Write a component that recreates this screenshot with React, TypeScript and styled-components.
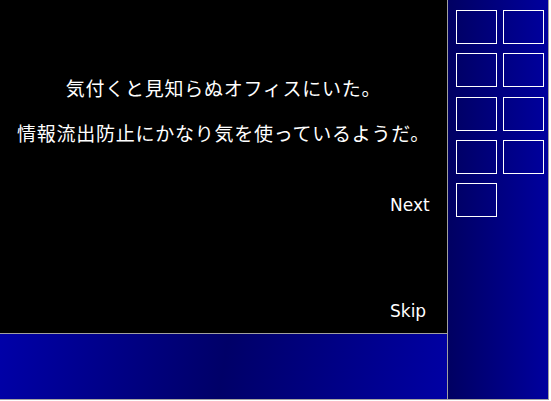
import React from "react";
import styled, { createGlobalStyle } from "styled-components";

const GlobalStyle = createGlobalStyle`
  html, body {
    margin: 0;
    padding: 0;
    background: #ffffff;
  }
`;

const lines = [
  "気付くと見知らぬオフィスにいた。",
  "情報流出防止にかなり気を使っているようだ。",
];

const slots = Array.from({ length: 9 }, (_, i) => i);

export default function App() {
  return (
    <>
      <GlobalStyle />
      <Frame>
        <MainColumn>
          <Stage>
            <Message>
              {lines.map((line) => (
                <Line key={line}>{line}</Line>
              ))}
            </Message>
            <Controls>
              <ControlButton>Next</ControlButton>
              <ControlButton>Skip</ControlButton>
            </Controls>
          </Stage>
          <Band />
        </MainColumn>
        <Sidebar>
          <SlotGrid>
            {slots.map((i) => (
              <Slot key={i} />
            ))}
          </SlotGrid>
        </Sidebar>
      </Frame>
    </>
  );
}

const Frame = styled.div`
  display: flex;
  width: 549px;
  height: 400px;
  box-sizing: border-box;
  border-right: 1px solid #a0a0a0;
  border-bottom: 1px solid #a0a0a0;
`;

const MainColumn = styled.div`
  display: flex;
  flex-direction: column;
  width: 448px;
  box-sizing: border-box;
  border-right: 1px solid #a0a0a0;
`;

const Stage = styled.div`
  display: flex;
  flex-direction: column;
  height: 334px;
  box-sizing: border-box;
  border-bottom: 1px solid #a0a0a0;
  background: #000000;
  padding-top: 76px;
`;

const Message = styled.div`
  display: flex;
  flex-direction: column;
  gap: 21px;
  align-items: center;
`;

const Line = styled.div`
  color: #ffffff;
  font-family: "Noto Sans CJK JP", sans-serif;
  font-size: 19px;
  line-height: 24px;
  letter-spacing: 0.75px;
  white-space: nowrap;
`;

const Controls = styled.div`
  display: flex;
  flex-direction: column;
  align-items: flex-start;
  gap: 86px;
  margin-top: 50px;
  padding-left: 390px;
`;

const ControlButton = styled.button`
  background: none;
  border: none;
  padding: 0;
  color: #ffffff;
  font-family: "DejaVu Sans", sans-serif;
  font-size: 17px;
  line-height: 20px;
  cursor: pointer;
`;

const Band = styled.div`
  flex: 1;
  background: linear-gradient(100deg, #0000a8 0%, #000068 50%, #0000a4 100%);
`;

const Sidebar = styled.div`
  flex: 1;
  background: linear-gradient(90deg, #000062 0%, #00009e 100%);
  padding: 10px 0 0 8px;
`;

const SlotGrid = styled.div`
  display: grid;
  grid-template-columns: 41px 41px;
  grid-auto-rows: 34px;
  column-gap: 6px;
  row-gap: 9.25px;
`;

const Slot = styled.div`
  box-sizing: border-box;
  border: 1px solid #ffffff;
`;
